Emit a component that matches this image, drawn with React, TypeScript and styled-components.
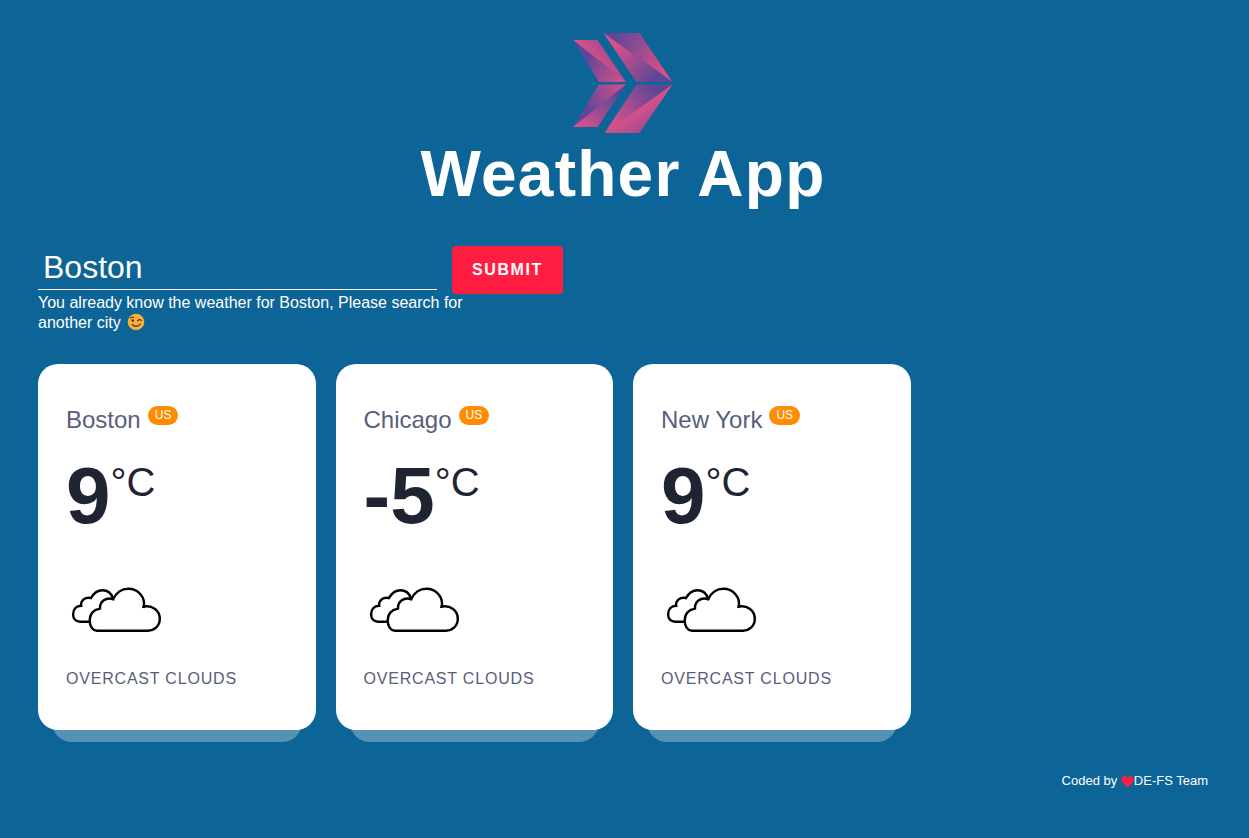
import React, { useState } from "react";
import styled, { createGlobalStyle } from "styled-components";

const GlobalStyle = createGlobalStyle`
  *, *::before, *::after { box-sizing: border-box; }
  body {
    margin: 0;
    background: #0d6496;
    color: #fff;
    font-family: Arial, "Liberation Sans", sans-serif;
    font-size: 16px;
  }
`;

const Page = styled.div`
  padding: 33px 41px 40px 38px;
`;

const Header = styled.header`
  display: flex;
  flex-direction: column;
  align-items: center;
  margin-bottom: 31px;
`;

const Title = styled.h1`
  margin: 0;
  font-size: 64px;
  line-height: 82px;
  letter-spacing: 0.02em;
`;

const SearchForm = styled.form`
  display: flex;
  align-items: flex-start;
  gap: 15px;
`;

const CityInput = styled.input`
  width: 100%;
  max-width: 399px;
  height: 44px;
  padding: 0 5px;
  border: 0;
  border-bottom: 1px solid #fff;
  outline: 0;
  background: transparent;
  color: #fff;
  font: 32px Arial, "Liberation Sans", sans-serif;
`;

const SubmitButton = styled.button`
  height: 48px;
  padding: 0 20px;
  border: 0;
  border-radius: 4px;
  background: #ff1e42;
  color: #fff;
  font: bold 16px Arial, "Liberation Sans", sans-serif;
  letter-spacing: 0.1em;
  cursor: pointer;
`;

const Message = styled.p`
  max-width: 450px;
  margin: -1px 0 31px;
  line-height: 20px;
`;

const Cards = styled.ul`
  position: relative;
  z-index: 0;
  display: grid;
  grid-template-columns: repeat(auto-fill, minmax(240px, 1fr));
  gap: 32px 20px;
  margin: 0;
  padding: 0;
  list-style: none;
`;

const Card = styled.li`
  position: relative;
  padding: 40px 28px;
  border-radius: 20px;
  background: #fff;
  color: #1e2432;

  &::after {
    content: "";
    position: absolute;
    z-index: -1;
    left: 14px;
    right: 14px;
    bottom: -12px;
    height: 40px;
    border-radius: 20px;
    background: rgba(255, 255, 255, 0.3);
  }
`;

const CityName = styled.h2`
  display: flex;
  align-items: flex-start;
  gap: 7px;
  margin: 0;
  color: #57607b;
  font-size: 24px;
  font-weight: normal;
  line-height: 32px;
`;

const Country = styled.span`
  margin-top: 2px;
  padding: 0 7px;
  border-radius: 10px;
  background: #ff8c00;
  color: #fff;
  font-size: 12px;
  line-height: 19px;
`;

const Temperature = styled.div`
  display: flex;
  align-items: flex-start;
  margin-top: 16px;
  font-size: 80px;
  font-weight: bold;
  line-height: 88px;
`;

const Unit = styled.span`
  margin-top: 8px;
  font-size: 40px;
  font-weight: normal;
  line-height: 44px;
`;

const Conditions = styled.figure`
  margin: 20px 0 0;

  svg { display: block; }
`;

const Description = styled.figcaption`
  margin-top: 8px;
  color: #57607b;
  font-size: 16px;
  line-height: 22px;
  letter-spacing: 0.05em;
  text-transform: uppercase;
`;

const Footer = styled.footer`
  display: flex;
  justify-content: flex-end;
  align-items: center;
  margin-top: 43px;
  font-size: 13px;
  line-height: 16px;
  white-space: pre;
`;

const WinkIcon = styled.svg`
  margin-left: 2px;
  vertical-align: -3px;
`;

const Shade = ({ id, from, to }: { id: string; from: number[]; to: number[] }) => (
  <linearGradient id={id} gradientUnits="userSpaceOnUse" x1={from[0]} y1={from[1]} x2={to[0]} y2={to[1]}>
    <stop offset="0" stopColor="#dc5088" />
    <stop offset="1" stopColor="#5d4798" />
  </linearGradient>
);

const facets = [
  { id: "a", points: "0,7 24.5,7 53,49", from: [16, 24], to: [50, -6] },
  { id: "b", points: "0,7 53,49 26,49", from: [51, 49], to: [12, 27] },
  { id: "c", points: "30.5,0 66.5,0 99.5,49", from: [96, 34], to: [40, 4] },
  { id: "d", points: "30.5,0 99.5,49 63.5,49", from: [40, 16], to: [82, 46] },
  { id: "e", points: "25.5,51.5 53,51.5 0,94", from: [52, 54], to: [12, 70] },
  { id: "f", points: "0,94 53,51.5 24.5,94", from: [8, 96], to: [44, 60] },
  { id: "g", points: "63.5,51.5 99.5,51.5 31.5,100", from: [36, 86], to: [82, 56] },
  { id: "h", points: "31.5,100 99.5,51.5 66.5,100", from: [66, 74], to: [92, 112] },
];

const Logo = () => (
  <svg width="100" height="100" viewBox="0 0 100 100" role="img" aria-label="Logo">
    <defs>
      {facets.map((f) => <Shade key={f.id} id={f.id} from={f.from} to={f.to} />)}
    </defs>
    {facets.map((f) => <polygon key={f.id} points={f.points} fill={`url(#${f.id})`} />)}
  </svg>
);

const Wink = () => (
  <WinkIcon width="18" height="18" viewBox="0 0 18 18" role="img" aria-label="winking face">
    <circle cx="9" cy="9" r="8.3" fill="#fbb03b" />
    <circle cx="5.8" cy="7.6" r="1.3" fill="#4a2c1c" />
    <g fill="none" stroke="#4a2c1c" strokeWidth="1.1" strokeLinecap="round">
      <path d="M3.4 5C4.2 4.2 5.4 4 6.6 4.5" />
      <path d="M10.6 7.8C11.6 6.6 13.4 6.5 14.5 7.4" />
      <path d="M5.2 11.4C7.2 14.2 11.4 14.1 13.2 10.9" />
    </g>
  </WinkIcon>
);

const Heart = () => (
  <svg width="13" height="13" viewBox="0 0 13 13" role="img" aria-label="love">
    <path d="M6.5 12.3C4 10.2.3 7.4.3 4.3.3 2.3 1.8 1 3.5 1 4.8 1 5.9 1.6 6.5 2.7 7.1 1.6 8.2 1 9.5 1c1.7 0 3.2 1.3 3.2 3.3 0 3.1-3.7 5.9-6.2 8Z" fill="#ff1e42" />
  </svg>
);

const Clouds = () => (
  <svg width="100" height="100" viewBox="0 0 100 100" fill="none" stroke="#000" strokeWidth="2.4" aria-hidden="true">
    <path d="M23.5 61.8H14C9.5 61.8 7.1 58.3 7.1 54.2 7.1 49.5 10 46 15.2 45.8 14.4 40.6 19.2 36.6 25 38 28 32.8 32 30.3 36.5 30.3 41 30.3 45 33 47 38" />
    <path d="M31 70.7C26.5 70.7 23.7 66 23.7 60.5 23.7 54 27.5 49.8 34 48.6 33.6 41.6 40 36.6 47.3 39.3 50 32.6 56 28.7 62.3 28.7 72.4 28.7 79.4 37.4 77.8 46.5 86.4 45 93.8 50.4 93.8 58.8 93.8 66 88.4 70.7 82 70.7Z" />
    <path d="M77.8 46L77.2 48" />
  </svg>
);

const cities = [
  { name: "Boston", country: "US", temp: 9, description: "overcast clouds" },
  { name: "Chicago", country: "US", temp: -5, description: "overcast clouds" },
  { name: "New York", country: "US", temp: 9, description: "overcast clouds" },
];

export default function App() {
  const [query, setQuery] = useState("Boston");

  return (
    <Page>
      <GlobalStyle />
      <Header>
        <Logo />
        <Title>Weather App</Title>
      </Header>
      <main>
        <SearchForm onSubmit={(e) => e.preventDefault()}>
          <CityInput
            type="text"
            aria-label="City"
            value={query}
            onChange={(e) => setQuery(e.target.value)}
          />
          <SubmitButton type="submit">SUBMIT</SubmitButton>
        </SearchForm>
        <Message role="status">
          You already know the weather for Boston, Please search for another city <Wink />
        </Message>
        <Cards>
          {cities.map((city) => (
            <Card key={city.name}>
              <CityName>
                {city.name}
                <Country>{city.country}</Country>
              </CityName>
              <Temperature>
                {city.temp}
                <Unit>°C</Unit>
              </Temperature>
              <Conditions>
                <Clouds />
                <Description>{city.description}</Description>
              </Conditions>
            </Card>
          ))}
        </Cards>
      </main>
      <Footer>
        <span>Coded by </span>
        <Heart />
        <span>DE-FS Team</span>
      </Footer>
    </Page>
  );
}
